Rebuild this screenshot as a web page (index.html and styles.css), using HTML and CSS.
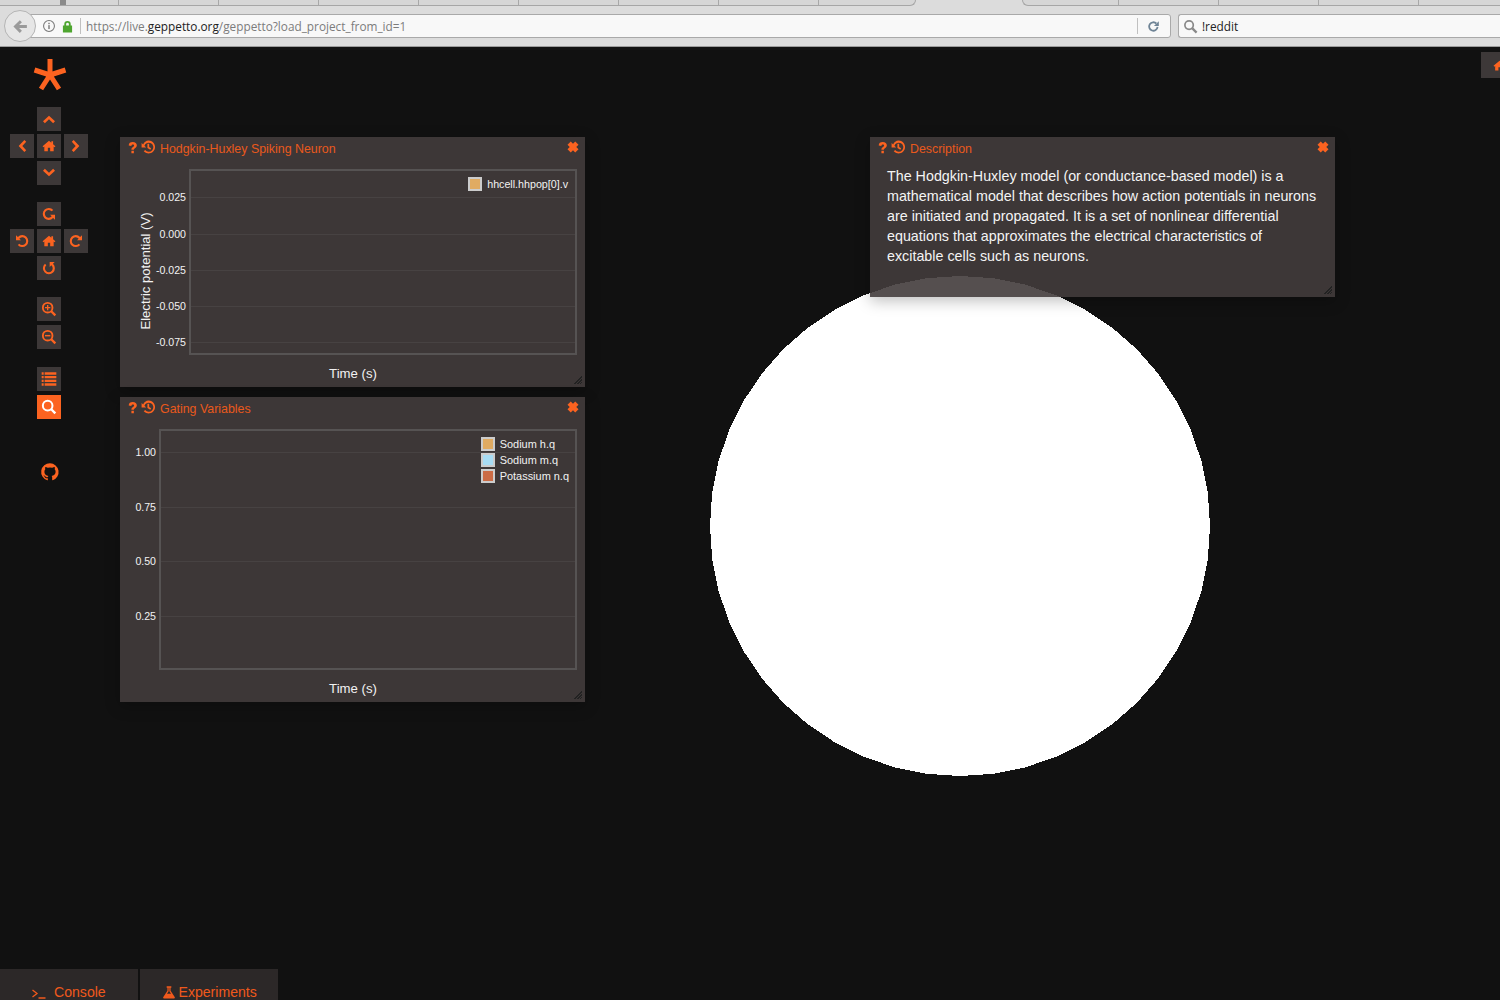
FILE: index.html
```html
<!DOCTYPE html>
<html lang="en">
<head>
    <meta charset="UTF-8">
    <title>Geppetto</title>
    <link rel="stylesheet" href="styles.css">
</head>
<body>
    <svg width="0" height="0" class="defs">
        <symbol id="i-home" viewBox="0 0 24 24"><path d="M12 3 1 12.500l1.500 1.600L4 13v8h6v-6h4v6h6v-8l1.500 1.100 1.500-1.600L19 9V4h-3v2.400z"/></symbol>
        <symbol id="i-q" viewBox="0 0 24 24"><path d="M5 8.500C5 4 8 2 12.500 2 17 2 20 4.500 20 8c0 3-1.700 4.300-3.500 5.500-1.300.9-2 1.500-2 2.500h-4.500c0-2.500 1-3.800 3-5 1.300-.8 2-1.400 2-2.500 0-1.200-1-2-2.300-2-1.500 0-2.500 1-2.800 2.500zM10 18h4.500v4.500H10z"/></symbol>
        <symbol id="i-x" viewBox="0 0 24 24"><path d="M7.500 1 12 5.500 16.500 1 23 7.500 18.500 12l4.500 4.500-6.500 6.500-4.500-4.500L7.500 23 1 16.500 5.500 12 1 7.500z"/></symbol>
        <symbol id="i-hist" viewBox="0 0 24 24"><path d="M13 1a11 11 0 1 1-8.300 18.200l2.400-2.100A7.800 7.800 0 1 0 5.900 10l3 3H1V5.100l2.700 2.700A11 11 0 0 1 13 1zm-2 5.500h3v5.600l3.400 2.100-1.500 2.500L11 13.800z"/></symbol>
        <symbol id="i-undo" viewBox="0 0 24 24"><path d="M3 3.500V11h7.500L8 8.500a5.800 5.800 0 1 1 0 7.500l-2.400 2.100A9 9 0 1 0 5.800 6z"/></symbol>
    </svg>

    <header class="browser">
        <div class="tabstrip">
            <span class="tabs-left"><span class="tab-first"></span><span class="tab-grip"></span></span>
            <span class="tabs-right"></span>
        </div>
        <div class="toolbar">
            <div class="back-btn">
                <svg viewBox="0 0 24 24" class="back-icon"><path d="M11 3l3 3-4 4h11v4H10l4 4-3 3-9-9z"/></svg>
            </div>
            <div class="urlbar">
                <svg viewBox="0 0 16 16" class="info-icon"><circle cx="8" cy="8" r="6.200" fill="none" stroke="#777" stroke-width="1.200"/><rect x="7.200" y="7" width="1.600" height="4.500" fill="#777"/><rect x="7.200" y="4.300" width="1.600" height="1.600" fill="#777"/></svg>
                <svg viewBox="0 0 12 14" class="lock-icon"><path d="M2.500 6V4.500a3.500 3.500 0 0 1 7 0V6H11v7.500H1V6zm2 0h3V4.500a1.500 1.500 0 0 0-3 0z"/></svg>
                <span class="url-sep"></span>
                <span class="url"><span class="url-dim">https://live.</span>geppetto.org<span class="url-dim">/geppetto?load_project_from_id=1</span></span>
                <span class="url-sep url-sep-right"></span>
                <svg viewBox="0 0 16 16" class="reload-icon"><path d="M13 8.500A5.200 5.200 0 1 1 11.500 4.300" fill="none" stroke="#6f8496" stroke-width="2.200"/><path d="M14.500 1.500v6h-6z" fill="#6f8496"/></svg>
            </div>
            <div class="searchbar">
                <svg viewBox="0 0 16 16" class="search-icon"><circle cx="6.500" cy="6.500" r="4.500" fill="none" stroke="#888" stroke-width="1.800"/><path d="M10 10l4.500 4.500" stroke="#888" stroke-width="2.400"/></svg>
                <span>!reddit</span>
            </div>
        </div>
    </header>

    <main class="desk">
        <svg class="logo" viewBox="0 0 34 34"><path d="M17 1v16M1.500 12 17 17M8 31 17 17M26 31 17 17M32.500 12 17 17" stroke="#fc6320" stroke-width="5" fill="none"/></svg>

        <nav class="sidebar">
            <div class="pad">
                <button class="btn pos-top"><svg viewBox="0 0 24 24"><path d="M3 15.500 12 7l9 8.500-2.800 2.800L12 12.500l-6.200 5.800z"/></svg></button>
                <button class="btn pos-left"><svg viewBox="0 0 24 24"><path d="M15.500 3 7 12l8.500 9 2.800-2.800L12.500 12l5.800-6.200z"/></svg></button>
                <button class="btn pos-mid"><svg><use href="#i-home"/></svg></button>
                <button class="btn pos-right"><svg viewBox="0 0 24 24"><path d="M8.500 3 17 12l-8.500 9-2.800-2.800L11.500 12 5.700 5.800z"/></svg></button>
                <button class="btn pos-bottom"><svg viewBox="0 0 24 24"><path d="M3 8.500 12 17l9-8.500-2.800-2.800L12 11.500 5.800 5.700z"/></svg></button>
            </div>
            <div class="pad pad-rotate">
                <button class="btn pos-top"><svg class="turn-180"><use href="#i-undo"/></svg></button>
                <button class="btn pos-left"><svg><use href="#i-undo"/></svg></button>
                <button class="btn pos-mid"><svg><use href="#i-home"/></svg></button>
                <button class="btn pos-right"><svg class="flip-x"><use href="#i-undo"/></svg></button>
                <button class="btn pos-bottom"><svg class="turn-90"><use href="#i-undo"/></svg></button>
            </div>
            <div class="stack stack-zoom">
                <button class="btn"><svg viewBox="0 0 24 24"><circle cx="10" cy="10" r="7.200" fill="none" stroke="#fc6320" stroke-width="2.800"/><path d="M15 15l6.500 6.500" stroke="#fc6320" stroke-width="3.400"/><path d="M6 10h8M10 6v8" stroke="#fc6320" stroke-width="2"/></svg></button>
                <button class="btn btn-zoomout"><svg viewBox="0 0 24 24"><circle cx="10" cy="10" r="7.200" fill="none" stroke="#fc6320" stroke-width="2.800"/><path d="M15 15l6.500 6.500" stroke="#fc6320" stroke-width="3.400"/><path d="M6 10h8" stroke="#fc6320" stroke-width="2.200"/></svg></button>
            </div>
            <div class="stack stack-tools">
                <button class="btn"><svg viewBox="0 0 24 24"><path d="M1 2h3v3.500H1zm4.500 0H23v3.500H5.500zM1 7.500h3V11H1zm4.500 0H23V11H5.500zM1 13h3v3.500H1zm4.500 0H23v3.500H5.500zM1 18.500h3V22H1zm4.500 0H23V22H5.500z"/></svg></button>
                <button class="btn btn-on"><svg viewBox="0 0 24 24"><circle cx="10" cy="10" r="7.200" fill="none" stroke="#fff" stroke-width="3"/><path d="M15 15l6.500 6.500" stroke="#fff" stroke-width="3.600"/></svg></button>
            </div>
            <svg class="github" viewBox="0 0 24 24"><path fill-rule="evenodd" d="M12 1.500A10.500 10.500 0 0 0 8.700 22c.5.100.7-.2.700-.5v-2c-2.900.6-3.500-1.300-3.500-1.300-.5-1.200-1.200-1.500-1.200-1.500-1-.7.100-.6.100-.6 1 .1 1.600 1.100 1.600 1.100.9 1.600 2.400 1.100 3 .9.100-.7.400-1.100.7-1.400-2.300-.3-4.800-1.200-4.800-5.200 0-1.100.4-2.100 1.100-2.800-.1-.3-.5-1.300.1-2.800 0 0 .9-.3 2.900 1.100a10 10 0 0 1 5.200 0c2-1.400 2.900-1.100 2.900-1.100.6 1.500.2 2.500.1 2.800.7.700 1.100 1.700 1.100 2.800 0 4-2.500 4.900-4.800 5.200.4.300.7 1 .7 1.900v2.800c0 .3.200.6.700.5A10.500 10.500 0 0 0 12 1.500z"/></svg>
        </nav>

        <!-- low poly sphere, seen as a 48 sided outline -->
        <svg class="sphere" viewBox="0 0 500 500" shape-rendering="crispEdges"><polygon fill="#fff" points="500,250 497.900,217.400 491.500,185.300 481,154.300 466.500,125 448.300,97.800 426.800,73.200 402.200,51.700 375,33.500 345.700,19 314.700,8.500 282.600,2.100 250,0 217.400,2.100 185.300,8.500 154.300,19 125,33.500 97.800,51.700 73.200,73.200 51.700,97.800 33.500,125 19,154.300 8.500,185.300 2.100,217.400 0,250 2.100,282.600 8.500,314.700 19,345.700 33.500,375 51.700,402.200 73.200,426.800 97.800,448.300 125,466.500 154.300,481 185.300,491.500 217.400,497.900 250,500 282.600,497.900 314.700,491.500 345.700,481 375,466.500 402.200,448.300 426.800,426.800 448.300,402.200 466.500,375 481,345.700 491.500,314.700 497.900,282.600"/></svg>

        <section class="widget widget-hh">
            <div class="widget-head">
                <svg class="wicon wicon-q"><use href="#i-q"/></svg>
                <svg class="wicon wicon-hist"><use href="#i-hist"/></svg>
                <span class="widget-title">Hodgkin-Huxley Spiking Neuron</span>
                <svg class="wicon wicon-x"><use href="#i-x"/></svg>
            </div>
            <div class="plot-hh">
                <span class="y-title">Electric potential (V)</span>
                <div class="ticks">
                    <span>0.025</span><span>0.000</span><span>-0.025</span><span>-0.050</span><span>-0.075</span>
                </div>
                <div class="plot-area">
                    <i class="gridline"></i><i class="gridline"></i><i class="gridline"></i><i class="gridline"></i><i class="gridline"></i>
                    <ul class="legend">
                        <li><b class="sw sw-orange"></b>hhcell.hhpop[0].v</li>
                    </ul>
                </div>
            </div>
            <div class="x-title">Time (s)</div>
            <span class="grip"></span>
        </section>

        <section class="widget widget-gate">
            <div class="widget-head">
                <svg class="wicon wicon-q"><use href="#i-q"/></svg>
                <svg class="wicon wicon-hist"><use href="#i-hist"/></svg>
                <span class="widget-title">Gating Variables</span>
                <svg class="wicon wicon-x"><use href="#i-x"/></svg>
            </div>
            <div class="plot-gate">
                <div class="ticks">
                    <span>1.00</span><span>0.75</span><span>0.50</span><span>0.25</span>
                </div>
                <div class="plot-area">
                    <i class="gridline"></i><i class="gridline"></i><i class="gridline"></i><i class="gridline"></i>
                    <ul class="legend">
                        <li><b class="sw sw-orange"></b>Sodium h.q</li>
                        <li><b class="sw sw-blue"></b>Sodium m.q</li>
                        <li><b class="sw sw-red"></b>Potassium n.q</li>
                    </ul>
                </div>
            </div>
            <div class="x-title">Time (s)</div>
            <span class="grip"></span>
        </section>

        <section class="widget widget-desc">
            <div class="widget-head">
                <svg class="wicon wicon-q"><use href="#i-q"/></svg>
                <svg class="wicon wicon-hist"><use href="#i-hist"/></svg>
                <span class="widget-title">Description</span>
                <svg class="wicon wicon-x"><use href="#i-x"/></svg>
            </div>
            <p class="desc-text">The Hodgkin-Huxley model (or conductance-based model) is a<br>mathematical model that describes how action potentials in neurons<br>are initiated and propagated. It is a set of nonlinear differential<br>equations that approximates the electrical characteristics of<br>excitable cells such as neurons.</p>
            <span class="grip"></span>
        </section>

        <button class="corner-btn"><svg><use href="#i-home"/></svg></button>

        <div class="tabs">
            <div class="bottom-tab bottom-tab-console">
                <svg viewBox="0 0 14 10" class="prompt"><path d="M0.500 1 5 4.500 0.500 8" fill="none" stroke="#f0591c" stroke-width="1.300"/><path d="M6.500 9h7" stroke="#f0591c" stroke-width="1.500"/></svg>
                Console
            </div>
            <div class="bottom-tab bottom-tab-exp">
                <svg viewBox="0 0 24 24" class="flask"><path d="M8 2h8v2.500h-1.300v5.500L22 21a1.500 1.500 0 0 1-1.300 2H3.300A1.500 1.500 0 0 1 2 21L9.300 10V4.500H8zm3.400 2.500v6.200L8.500 15h7l-2.900-4.300V4.500z"/></svg>
                Experiments
            </div>
        </div>
    </main>
</body>
</html>
```

FILE: styles.css
```css
html, body {
    margin: 0;
    padding: 0;
    height: 1000px;
    overflow: hidden;
}
body {
    font-family: "Liberation Sans", Arial, sans-serif;
    background-color: #111;
    color: #fff;
    display: flex;
    flex-direction: column;
}
.defs {
    position: absolute;
}

/* browser chrome */
.browser {
    height: 47px;
    background-color: #dcdcdc;
    border-bottom: 1px solid #9c9c9c;
    box-sizing: border-box;
    font-family: "Open Sans", sans-serif;
}
.tabstrip {
    display: flex;
    justify-content: space-between;
    height: 6px;
}
.tabs-left, .tabs-right {
    position: relative;
    display: block;
    box-sizing: border-box;
    height: 6px;
    border-bottom: 1px solid #a6a6a6;
    background-color: #d6d6d6;
    background-image: repeating-linear-gradient(to right, transparent 0, transparent 99px, #a8a8a8 99px, #a8a8a8 100px);
}
.tabs-left {
    width: 916px;
    border-right: 1px solid #a6a6a6;
    border-radius: 0 0 8px 0;
    background-position: 19px 0;
}
.tabs-right {
    width: 478px;
    border-left: 1px solid #a6a6a6;
    border-radius: 0 0 0 8px;
    background-position: -4px 0;
}
.tab-first {
    position: absolute;
    left: 0;
    top: 0;
    width: 60px;
    height: 5px;
    background-color: #d6d6d6;
}
.tab-grip {
    position: absolute;
    left: 60px;
    top: 0;
    width: 6px;
    height: 5px;
    background-color: #8a8a8a;
}
.toolbar {
    display: flex;
    align-items: center;
    height: 40px;
    position: relative;
    box-sizing: border-box;
}
.back-btn {
    position: absolute;
    left: 4px;
    top: 4px;
    width: 32px;
    height: 32px;
    box-sizing: border-box;
    border-radius: 50%;
    border: 1px solid #b4b4b4;
    background-color: #e6e6e6;
    display: flex;
    align-items: center;
    justify-content: center;
    z-index: 1;
}
.back-icon {
    width: 17px;
    height: 17px;
    fill: #9a9a9a;
}
.urlbar {
    margin-left: 20px;
    width: 1151px;
    height: 24px;
    box-sizing: border-box;
    border: 1px solid #a9a9a9;
    border-radius: 0 3px 3px 0;
    background-color: #f8f8f8;
    display: flex;
    align-items: center;
    padding-left: 21px;
    font-size: 11.800px;
}
.info-icon {
    width: 14px;
    height: 14px;
}
.lock-icon {
    width: 11px;
    height: 13px;
    margin-left: 6px;
    fill: #4ea52f;
}
.url-sep {
    width: 1px;
    height: 16px;
    margin-left: 7px;
    background-color: #c0c0c0;
}
.url {
    margin-left: 5px;
    color: #222;
    white-space: nowrap;
}
.url-dim {
    color: #7c7c7c;
}
.url-sep-right {
    margin-left: auto;
}
.reload-icon {
    width: 13px;
    height: 13px;
    margin: 0 10px 0 9px;
}
.searchbar {
    margin-left: 7px;
    flex: 1;
    height: 24px;
    box-sizing: border-box;
    border: 1px solid #a9a9a9;
    border-right: none;
    border-radius: 3px 0 0 3px;
    background-color: #f8f8f8;
    display: flex;
    align-items: center;
    padding-left: 4px;
    font-size: 11.800px;
    color: #222;
}
.search-icon {
    width: 15px;
    height: 15px;
    margin-right: 4px;
}

/* app */
.desk {
    position: relative;
    flex: 1;
    background-color: #111;
}
.logo {
    position: absolute;
    left: 32.500px;
    top: 11px;
    width: 34px;
    height: 34px;
}
.sidebar {
    position: absolute;
    left: 10px;
    top: 60px;
    width: 78px;
    display: flex;
    flex-direction: column;
    align-items: center;
}
.pad {
    display: grid;
    grid-template-columns: repeat(3, 24px);
    grid-template-rows: repeat(3, 24px);
    gap: 3px;
}
.pad-rotate {
    margin-top: 17px;
}
.pos-top { grid-column: 2; grid-row: 1; }
.pos-left { grid-column: 1; grid-row: 2; }
.pos-mid { grid-column: 2; grid-row: 2; }
.pos-right { grid-column: 3; grid-row: 2; }
.pos-bottom { grid-column: 2; grid-row: 3; }
.btn {
    width: 24px;
    height: 24px;
    padding: 0;
    border: none;
    background-color: #3d3838;
    display: flex;
    align-items: center;
    justify-content: center;
}
.btn svg {
    width: 16px;
    height: 16px;
    fill: #fc6320;
}
.btn.pos-mid svg {
    width: 14px;
    height: 14px;
}
.turn-180 {
    transform: rotate(180deg);
}
.turn-90 {
    transform: rotate(90deg);
}
.flip-x {
    transform: scaleX(-1);
}
.btn-on {
    background-color: #fc6320;
}
.stack {
    display: flex;
    flex-direction: column;
}
.stack-zoom {
    margin-top: 17px;
}
.btn-zoomout {
    margin-top: 4px;
}
.stack-tools {
    margin-top: 18px;
    gap: 4px;
}
.github {
    margin-top: 43px;
    margin-left: 2px;
    width: 20px;
    height: 20px;
    fill: #fc6320;
}
.sphere {
    position: absolute;
    left: 710px;
    top: 229px;
    width: 500px;
    height: 500px;
}

/* widgets */
.widget {
    position: absolute;
    background-color: rgba(67, 60, 60, 0.9);
    box-shadow: 0 4px 14px rgba(0, 0, 0, 0.25);
}
.widget-hh {
    left: 120px;
    top: 90px;
    width: 465px;
    height: 250px;
}
.widget-gate {
    left: 120px;
    top: 350px;
    width: 465px;
    height: 305px;
}
.widget-desc {
    left: 870px;
    top: 90px;
    width: 465px;
    height: 160px;
}
.widget-head {
    position: relative;
    height: 23px;
    display: flex;
    align-items: center;
    padding-left: 6px;
    color: #e9591c;
    font-size: 12.400px;
}
.wicon {
    fill: #fc6320;
    flex: none;
}
.wicon-q {
    width: 13px;
    height: 13px;
    margin-top: -3px;
}
.wicon-hist {
    width: 14px;
    height: 14px;
    margin-left: 2px;
    margin-top: -4px;
}
.widget-title {
    margin-left: 5px;
}
.wicon-x {
    position: absolute;
    right: 6px;
    top: 4px;
    width: 12px;
    height: 12px;
}
.grip {
    position: absolute;
    right: 3px;
    bottom: 3px;
    width: 9px;
    height: 9px;
    background-image: repeating-linear-gradient(135deg, transparent 0, transparent 1px, #222 1px, #222 2px);
    clip-path: polygon(100% 0, 100% 100%, 0 100%);
}
.plot-hh, .plot-gate {
    position: relative;
    margin-right: 8px;
    margin-top: 9px;
}
.plot-hh {
    height: 186px;
    margin-left: 69px;
}
.plot-gate {
    height: 241px;
    margin-left: 39px;
}
.plot-area {
    position: relative;
    box-sizing: border-box;
    height: 100%;
    border: 2px solid #565353;
}
.gridline {
    position: absolute;
    left: 0;
    right: 0;
    height: 1px;
    background-color: #474242;
}
.plot-hh .gridline:nth-child(1) { top: 26px; }
.plot-hh .gridline:nth-child(2) { top: 63px; }
.plot-hh .gridline:nth-child(3) { top: 99px; }
.plot-hh .gridline:nth-child(4) { top: 135px; }
.plot-hh .gridline:nth-child(5) { top: 171px; }
.plot-gate .gridline:nth-child(1) { top: 21px; }
.plot-gate .gridline:nth-child(2) { top: 76px; }
.plot-gate .gridline:nth-child(3) { top: 130px; }
.plot-gate .gridline:nth-child(4) { top: 185px; }
.ticks span {
    position: absolute;
    right: 100%;
    margin-right: 3px;
    font-size: 10.600px;
    line-height: 12px;
    color: #f2f2f2;
    white-space: nowrap;
}
.plot-hh .ticks span:nth-child(1) { top: 22px; }
.plot-hh .ticks span:nth-child(2) { top: 59px; }
.plot-hh .ticks span:nth-child(3) { top: 95px; }
.plot-hh .ticks span:nth-child(4) { top: 131px; }
.plot-hh .ticks span:nth-child(5) { top: 167px; }
.plot-gate .ticks span:nth-child(1) { top: 17px; }
.plot-gate .ticks span:nth-child(2) { top: 72px; }
.plot-gate .ticks span:nth-child(3) { top: 126px; }
.plot-gate .ticks span:nth-child(4) { top: 181px; }
.y-title {
    position: absolute;
    left: -44px;
    top: 102px;
    transform: translate(-50%, -50%) rotate(-90deg);
    font-size: 13.100px;
    color: #f2f2f2;
    white-space: nowrap;
}
.x-title {
    margin-top: 11px;
    margin-left: 233px;
    transform: translateX(-50%);
    width: max-content;
    font-size: 13.200px;
    line-height: 15px;
    color: #f2f2f2;
}
.legend {
    position: absolute;
    right: 6px;
    top: 5px;
    margin: 0;
    padding: 0;
    list-style: none;
    font-size: 10.950px;
    color: #f2f2f2;
}
.plot-hh .legend {
    right: 7px;
    font-size: 10.700px;
}
.legend li {
    display: flex;
    align-items: center;
    height: 16px;
}
.sw {
    width: 10px;
    height: 10px;
    border: 2px solid #ccc;
    margin-right: 5px;
}
.sw-orange { background-color: #e0ab62; }
.sw-blue { background-color: #a8dcf3; }
.sw-red { background-color: #cb6b45; }
.desc-text {
    margin: 0;
    padding: 6px 0 0 17px;
    font-size: 14.300px;
    line-height: 20px;
    color: #f4f4f4;
    white-space: nowrap;
}
.corner-btn {
    position: absolute;
    left: 1481px;
    top: 5px;
    width: 30px;
    height: 26px;
    padding: 0 0 0 12px;
    border: none;
    background-color: #3d3838;
    display: flex;
    align-items: center;
}
.corner-btn svg {
    width: 13px;
    height: 13px;
    fill: #fc6320;
    flex: none;
}
.tabs {
    position: absolute;
    left: 0;
    bottom: 0;
    display: flex;
    gap: 2px;
}
.bottom-tab {
    height: 31px;
    box-sizing: border-box;
    background-color: #2c2828;
    color: #f0591c;
    font-size: 14.100px;
    line-height: 16px;
    padding-top: 15px;
    display: flex;
    align-items: flex-start;
    white-space: nowrap;
    width: 138px;
}
.bottom-tab-console {
    padding-left: 32px;
}
.prompt {
    width: 14px;
    height: 10px;
    margin: 5px 8px 0 0;
}
.bottom-tab-exp {
    padding-left: 21.500px;
}
.flask {
    width: 14px;
    height: 14px;
    margin: 1px 3px 0 0;
    fill: #f0591c;
}
```
